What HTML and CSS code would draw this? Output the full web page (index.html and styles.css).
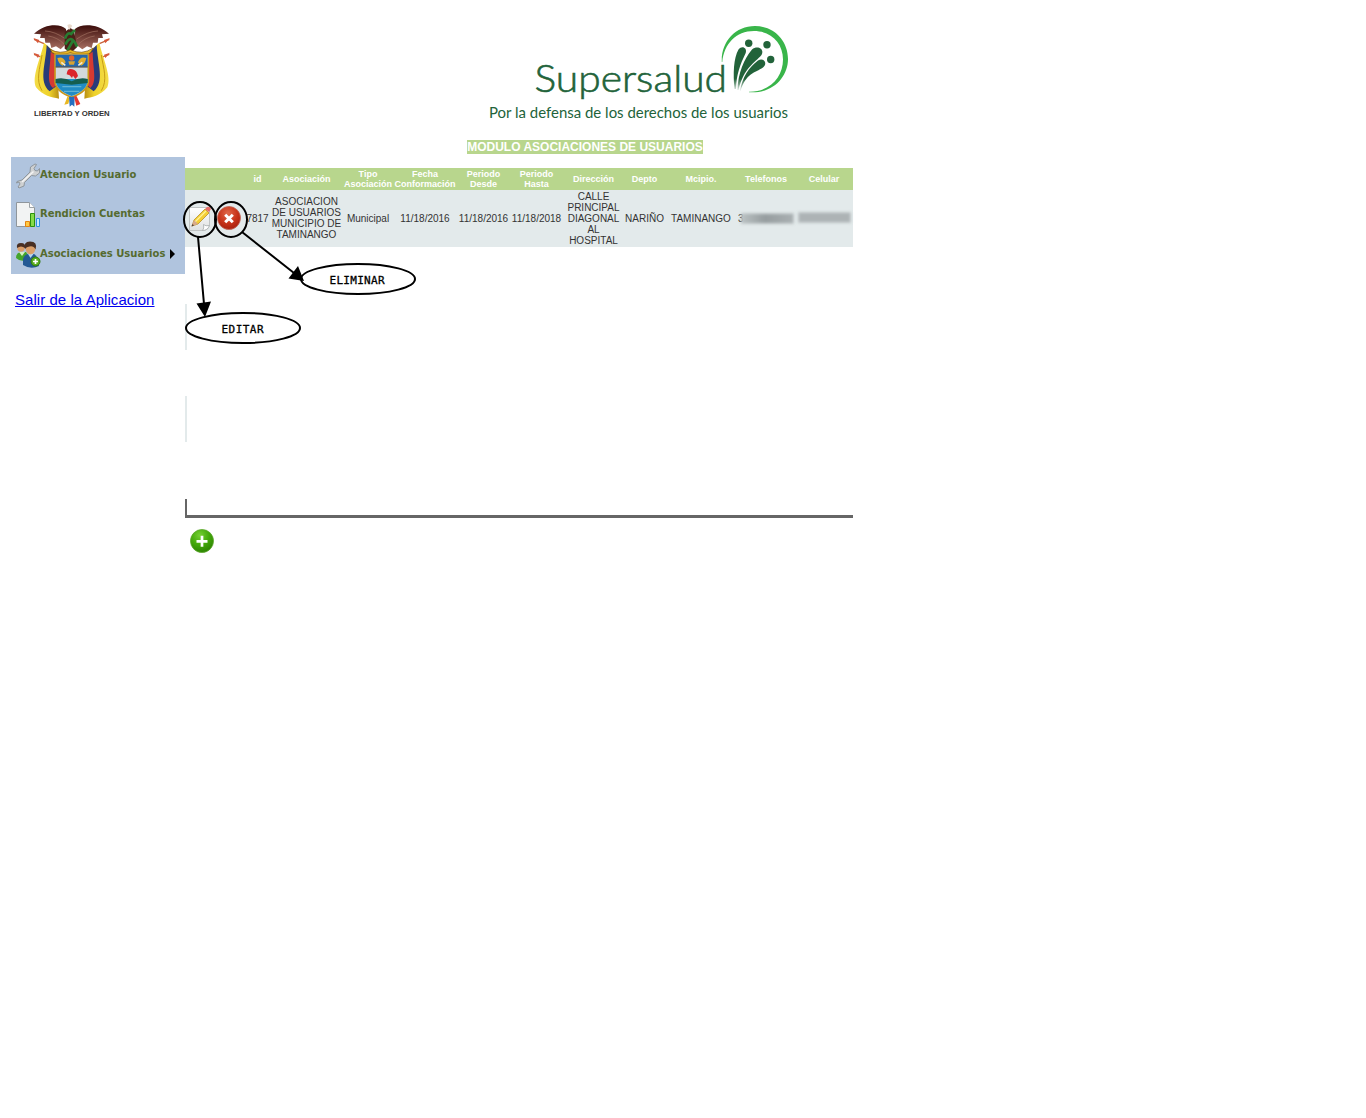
FILE: index.html
```html
<!DOCTYPE html>
<html lang="es">
<head>
<meta charset="utf-8">
<title>Supersalud - Asociaciones de Usuarios</title>
<link rel="stylesheet" href="styles.css">
</head>
<body>
<header class="banner">
  <svg class="emblem" viewBox="0 0 315 330">
    <defs>
      <linearGradient id="wing" x1="0" y1="0" x2="0" y2="1"><stop offset="0" stop-color="#3b0c0a"/><stop offset="1" stop-color="#a87062"/></linearGradient>
      <linearGradient id="gold" x1="0" y1="0" x2="1" y2="0"><stop offset="0" stop-color="#f3dc48"/><stop offset=".6" stop-color="#efd22a"/><stop offset="1" stop-color="#b98f12"/></linearGradient>
      <linearGradient id="goldR" x1="1" y1="0" x2="0" y2="0"><stop offset="0" stop-color="#f3dc48"/><stop offset=".6" stop-color="#efd22a"/><stop offset="1" stop-color="#b98f12"/></linearGradient>
    </defs>
    <g transform="translate(0 5)">
    <path d="M42 113l26 10M42 68l30 13M268 113l-26 10M268 68l-30 13" stroke="#c8643a" stroke-width="4"/>
    <path d="M40 64l18 6-4 10zM40 108l18 6-4 10zM270 64l-18 6 4 10zM270 108l-18 6 4 10z" fill="#d8583a"/>
    <path d="M72 78C62 125 34 180 48 212C70 238 94 242 117 246L108 110Z" fill="url(#gold)"/>
    <path d="M238 78C248 125 276 180 262 212C240 238 216 242 193 246L202 110Z" fill="url(#goldR)"/>
    <path d="M80 85C78 140 54 195 89 224L110 208 104 110Z" fill="#283b79"/>
    <path d="M230 85C232 140 256 195 221 224L200 208 206 110Z" fill="#283b79"/>
    <path d="M92 105C91 160 78 195 99 214L115 200 106 115ZM218 105C219 160 232 195 211 214L195 200 204 115Z" fill="#d63a32"/>
    <path d="M66 115C60 155 46 190 66 222M244 115C250 155 264 190 244 222" fill="none" stroke="#c79c16" stroke-width="3"/>
    <path d="M138 37C122 20 74 20 42 51L63 53 60 64 74 64 76 78 90 78 94 94 108 89 122 98 138 82Z" fill="url(#wing)"/>
    <path d="M165 37C181 20 235 20 267 51L246 53 249 64 235 64 233 78 219 78 215 94 201 89 187 98 165 82Z" fill="url(#wing)"/>
    <path d="M75 43Q105 44 137 67M85 58Q112 62 132 82M234 43Q204 44 170 67M224 58Q196 62 176 82" fill="none" stroke="#a57464" stroke-width="2"/>
    <path d="M134 45L151 34 162 41 171 92 153 108 134 96Z" fill="#4a2118"/>
    <path d="M135 66Q142 45 153 52L165 40M136 84Q153 48 171 90M142 102l18-32" fill="none" stroke="#287c31" stroke-width="8"/>
    <path d="M142 25q10-5 15 3l-10 12z" fill="#e8d9cb"/>
    <path d="M91 98Q120 115 151 99Q185 117 220 94L211 109Q180 120 151 108Q119 121 96 108Z" fill="#e9b824" stroke="#6f4814" stroke-width="2"/>
    <path d="M105 112H205V194Q203 224 155 242Q107 224 105 194Z" fill="#d2d9dc" stroke="#c9971b" stroke-width="5"/>
    <path d="M107 114H203V150H107Z" fill="#2367ad"/>
    <path d="M107 187H203Q205 220 155 238Q105 220 107 187Z" fill="#218cc4"/>
    <path d="M107 187q24-7 48 7q26-14 48-7v12l-48 5-48-5z" fill="#145e50"/>
    <path d="M127 210h57M132 224h46" stroke="#62b3d3" stroke-width="4"/>
    <path d="M112 124q18-7 25 13l-9 10q-12-4-16-23M199 124q-18-7-25 13l9 10q12-4 16-23" fill="#e0ad2f"/>
    <path d="M124 137l12 9M187 137l-12 9" stroke="#f4edd4" stroke-width="5"/>
    <circle cx="155" cy="124" r="8" fill="#e4632b"/><path d="M145 134h20l-3 10h-14z" fill="#d6a334"/>
    <path d="M107 151H203" stroke="#3c3a35" stroke-width="3"/>
    <path d="M140 173Q142 152 157 158Q170 160 174 178L166 187 159 177 156 184 149 176Z" fill="#dc252c"/>
    <path d="M142 240L133 264 145 261 150 243Z" fill="#e8b824"/><path d="M147 240L149 270 156 264 163 270 164 240Z" fill="#246fc0"/><path d="M162 240l7 27 12-5-12-25z" fill="#e43a32"/>
    </g>
    <text x="42" y="302" textLength="227" lengthAdjust="spacingAndGlyphs" class="motto">LIBERTAD Y ORDEN</text>
  </svg>
  <svg class="brand" viewBox="0 0 320 115">
    <defs>
      <linearGradient id="spray" gradientUnits="userSpaceOnUse" x1="0" y1="48" x2="0" y2="77"><stop offset="0" stop-color="#22633a"/><stop offset=".55" stop-color="#22633a"/><stop offset="1" stop-color="#22633a" stop-opacity="0"/></linearGradient>
    </defs>
    <text x="54.500" y="77" textLength="192.500" lengthAdjust="spacingAndGlyphs" class="brand-name">Supersalud</text>
    <text x="9" y="103" textLength="299" lengthAdjust="spacingAndGlyphs" class="brand-slogan">Por la defensa de los derechos de los usuarios</text>
    <path d="M241.800 47C241 27 255 11 275 11C294 11 308 25.500 308 44C308 62 293 79 269 77.200L269 76.700C291 77 303 61 303 44.500C303 28 291 16 274 16C256 16 244 29 242.300 47Z" fill="#39b54a"/>
    <g fill="url(#spray)">
      <path d="M254.500 74C253 59 253.500 43 258.500 34.500C262 30 267.500 33 265.700 38C260 50 256.500 59 256 74Z"/>
      <path d="M257.500 75C258 58 264 44 272 34.500C277 30 285 33.500 281.500 40C275 48 264 52 258.500 75Z"/>
      <path d="M260 76C262 63 269 52 278 45.500C284 42 288 49 283 52.500C275 58 266 58 260.500 76Z"/>
    </g>
    <g fill="#22633a"><circle cx="268.700" cy="28.200" r="3.700"/><circle cx="287" cy="29.800" r="3.700"/><circle cx="290.700" cy="44.500" r="3.700"/></g>
  </svg>
</header>

<main class="page">
  <aside class="side">
    <nav class="menu">
      <a class="item">
        <svg class="icon" viewBox="0 0 26 28"><path d="M2 19.500l5-1.500 8-8 .5-5L20 2l1.500.5-2.500 4 1 2 2.500.5L24.500 6.500v4.500l-4 3-4-.5-7 7-.5 3.500L4 26l-1-1 2-3-1-2-2.500 1z" fill="#cfd1d2" stroke="#8e969d" stroke-width="1"/><path d="M7 20L18.500 9.500" stroke="#f4f4f4" stroke-width="1.500"/></svg>
        <span>Atencion Usuario</span>
      </a>
      <a class="item">
        <svg class="icon" viewBox="0 0 26 28"><path d="M1.500 1.500h13l5 5v19h-18z" fill="#f2f3f3" stroke="#8f969c"/><path d="M14.500 1.500v5h5" fill="#fff" stroke="#9da2a6"/><path d="M10.500 20.500h4v5h-4z" fill="#ffca43" stroke="#e48310"/><path d="M15.500 12.500h4v13h-4z" fill="#86dc49" stroke="#2c910c"/><path d="M21.500 17.500h3v8h-3z" fill="#c3e8ff" stroke="#2e91df"/></svg>
        <span>Rendicion Cuentas</span>
      </a>
      <a class="item">
        <svg class="icon" viewBox="0 0 26 28"><path d="M1 17q0-5 4-6h6l3 4-2 4q-7 2-11-2z" fill="#45a52c"/><path d="M4 11l3 4 3-4z" fill="#d7f0c8"/><circle cx="6" cy="7" r="3.700" fill="#d99d68"/><path d="M2 7q-1-5 4-5 5 0 4 5-4-3-8 0" fill="#493024"/><path d="M8 24V18q1-4 5-5h6q4 2 5 12-8 4-16-1z" fill="#245994"/><path d="M13 13l2.500 4 3-4z" fill="#b9d8ef"/><path d="M10.500 6q0-4 5-4t5 4q0 7-5 7.500-5-.5-5-7.500" fill="#dba06b"/><path d="M10 8Q8 .500 15 .500q8 0 5.500 8-2-4-6-3-3 0-4.500 2.500" fill="#493024"/><circle cx="20.500" cy="20.500" r="4.500" fill="#58ac1d" stroke="#2e780d"/><path d="M18 20.500h5M20.500 18v5" stroke="#fff" stroke-width="1.700"/></svg>
        <span>Asociaciones Usuarios</span>
        <i class="caret"></i>
      </a>
    </nav>
    <a class="exit" href="#">Salir de la Aplicacion</a>
  </aside>

  <section class="content">
    <h1 class="title"><span>MODULO ASOCIACIONES DE USUARIOS</span></h1>
    <table class="grid">
      <colgroup><col class="w30"><col class="w30"><col class="w25"><col class="w73"><col class="w50"><col class="w64"><col class="w53"><col class="w53"><col class="w61"><col class="w41"><col class="w72"><col class="w58"><col class="w58"></colgroup>
      <thead>
        <tr><th></th><th></th><th>id</th><th>Asociación</th><th>Tipo<br>Asociación</th><th>Fecha<br>Conformación</th><th>Periodo<br>Desde</th><th>Periodo<br>Hasta</th><th>Dirección</th><th>Depto</th><th>Mcipio.</th><th>Telefonos</th><th>Celular</th></tr>
      </thead>
      <tbody>
        <tr>
          <td><svg class="action" viewBox="0 0 26 28"><defs><linearGradient id="paper" x1="0" y1="0" x2="0" y2="1"><stop offset="0" stop-color="#fff"/><stop offset="1" stop-color="#dfe1e1"/></linearGradient></defs><path d="M2.500 2.500h20v18q-1 4-5 5h-15z" fill="url(#paper)" stroke="#c0c4c4"/><path d="M22.500 20.500q-4 1-6-1 1 4-1 6 5 0 7-5z" fill="#fff" stroke="#a8adad" stroke-width=".8"/><path d="M5 21l2-6L18 4l4 4L11 19z" fill="#f5cf35" stroke="#ae841b" stroke-width=".7"/><path d="M8 17L19 6" stroke="#fff299" stroke-width="1.300"/><path d="M18 4l2-2q3-1 4 2l-2 3z" fill="#e66c68"/><path d="M4.500 21.500L7 15l4 4z" fill="#d8a98b"/><path d="M4.500 21.500l1-2.500 1.500 1.500z" fill="#4c4039"/></svg></td>
          <td><svg class="action" viewBox="0 0 26 28"><defs><radialGradient id="red" cx=".45" cy=".3" r=".75"><stop offset="0" stop-color="#e0694a"/><stop offset=".55" stop-color="#c8341a"/><stop offset="1" stop-color="#a31c0a"/></radialGradient></defs><circle cx="12" cy="13" r="11.500" fill="url(#red)" stroke="#c0695a" stroke-width=".8"/><path d="M8.200 9.700l7.600 7.600M15.800 9.700l-7.600 7.600" stroke="#fff" stroke-width="3"/></svg></td>
          <td>7817</td><td><div class="name">ASOCIACION<br>DE USUARIOS<br>MUNICIPIO DE<br>TAMINANGO</div></td><td>Municipal</td><td>11/18/2016</td><td>11/18/2016</td><td>11/18/2018</td><td>CALLE<br>PRINCIPAL<br>DIAGONAL<br>AL<br>HOSPITAL</td><td>NARIÑO</td><td>TAMINANGO</td>
          <td><div class="phone"><span class="digit">3</span><span class="smudge"></span></div></td>
          <td><div class="phone"><span class="smudge pale"></span></div></td>
        </tr>
      </tbody>
    </table>
    <div class="blank first"></div>
    <div class="blank"></div>
    <div class="footer-line"></div>
    <svg class="add" viewBox="0 0 24 24"><defs><radialGradient id="green" cx=".4" cy=".25" r=".8"><stop offset="0" stop-color="#75cf33"/><stop offset=".5" stop-color="#44a90b"/><stop offset="1" stop-color="#298000"/></radialGradient></defs><circle cx="12" cy="12" r="11.500" fill="url(#green)" stroke="#5da72c" stroke-width=".8"/><path d="M6.500 12.300h11M12 6.800v11" stroke="#fff" stroke-width="2.700"/></svg>
  </section>
</main>

<svg class="notes" viewBox="0 0 420 350">
  <g fill="none" stroke="#000" stroke-width="2">
    <ellipse cx="200" cy="219.500" rx="16" ry="17.500"/>
    <ellipse cx="231" cy="219.500" rx="16" ry="17.500"/>
    <ellipse cx="358" cy="279" rx="57" ry="15"/>
    <ellipse cx="243" cy="328" rx="57" ry="15"/>
    <path d="M198 237L204 304M242 232L294 273"/>
  </g>
  <path d="M196.500 303.500L211 301.500 205 317ZM298 266L288.500 278.500 304 281Z"/>
  <text x="329.500" y="284" textLength="55">ELIMINAR</text>
  <text x="221.500" y="333" textLength="42">EDITAR</text>
</svg>
</body>
</html>
```
FILE: styles.css
```css
body {
  margin: 0;
  background: #fff;
  font-family: "Liberation Sans", Arial, sans-serif;
}

.banner {
  display: flex;
  height: 125px;
  padding: 15px 0 0 20px;
  align-items: flex-start;
}
.emblem { width: 105px; height: 110px; }
.motto { font: bold 21px "Liberation Sans", sans-serif; fill: #333; }
.brand { width: 320px; height: 115px; margin-left: 355px; overflow: visible; }
.brand-name {
  font: 300 38px Lato, sans-serif;
  fill: #22633a;
  stroke: #22633a;
  stroke-width: .6px;
}
.brand-slogan { font: 16px Lato, sans-serif; fill: #22633a; }

.page { display: flex; }
.side { width: 174px; padding: 17px 0 0 11px; flex: none; }
.menu {
  height: 117px;
  background: #b0c4de;
  display: grid;
  grid-template-rows: 37px 41px 39px;
}
.item {
  display: flex;
  align-items: center;
  padding-left: 4px;
  color: #556b2f;
  font: bold 10px "DejaVu Sans", Verdana, sans-serif;
  white-space: nowrap;
}
.item span { padding-bottom: 2px; }
.icon { width: 26px; height: 28px; margin-right: -1px; flex: none; }
.caret {
  margin: 0 0 2px 5px;
  border-left: 5px solid #000;
  border-top: 5px solid transparent;
  border-bottom: 5px solid transparent;
}
.exit {
  display: block;
  margin: 17px 0 0 4px;
  font-size: 15px;
  line-height: 18px;
  letter-spacing: .05px;
  color: #00e;
  white-space: nowrap;
}

.content { width: 800px; }
.title {
  margin: 0 0 14px;
  height: 14px;
  text-align: center;
  font-size: 12px;
  line-height: 14px;
  color: #fff;
}
.title span { display: inline-block; background: #b8d68d; }

.grid {
  width: 668px;
  table-layout: fixed;
  border-collapse: collapse;
  text-align: center;
  color: #333;
}
.grid th {
  height: 22px;
  padding: 0;
  background: #b8d68d;
  color: #fff;
  font-size: 9px;
  line-height: 10px;
  white-space: nowrap;
}
.grid td {
  height: 57px;
  padding: 0;
  background: #e3eaeb;
  font-size: 10px;
  line-height: 11px;
  white-space: nowrap;
}
.w25 { width: 25px; }
.w30 { width: 30px; }
.w41 { width: 41px; }
.w50 { width: 50px; }
.w53 { width: 53px; }
.w58 { width: 58px; }
.w61 { width: 61px; }
.w64 { width: 64px; }
.w72 { width: 72px; }
.w73 { width: 73px; }
.action { display: block; width: 26px; height: 28px; margin: 0 auto; }
.name { padding-bottom: 2px; }

.phone { display: flex; align-items: center; padding-left: 1px; }
.digit { width: 4px; }
.smudge {
  position: relative;
  width: 51px;
  height: 9px;
  background: linear-gradient(90deg, #b9c0c1, #969d9f 45%, #aab0b2);
  box-shadow: 0 0 0 1px #c5cccd;
  filter: blur(1.5px);
}
.pale { background: #adb3b5; margin: -3px 0 0 3px; }

.blank { height: 46px; margin-top: 46px; border-left: 2px solid #e3eaeb; }
.first { margin-top: 57px; }
.footer-line {
  box-sizing: border-box;
  width: 668px;
  height: 19px;
  margin-top: 57px;
  border-left: 2px solid #666;
  border-bottom: 3px solid #666;
}
.add { display: block; width: 24px; height: 24px; margin: 11px 0 0 5px; }

/* callouts drawn over the table */
.notes {
  position: absolute;
  left: 0;
  top: 0;
  width: 420px;
  height: 350px;
  pointer-events: none;
}
.notes text {
  font: 11px "DejaVu Sans Mono", monospace;
  stroke: #000;
  stroke-width: .3px;
}
```
